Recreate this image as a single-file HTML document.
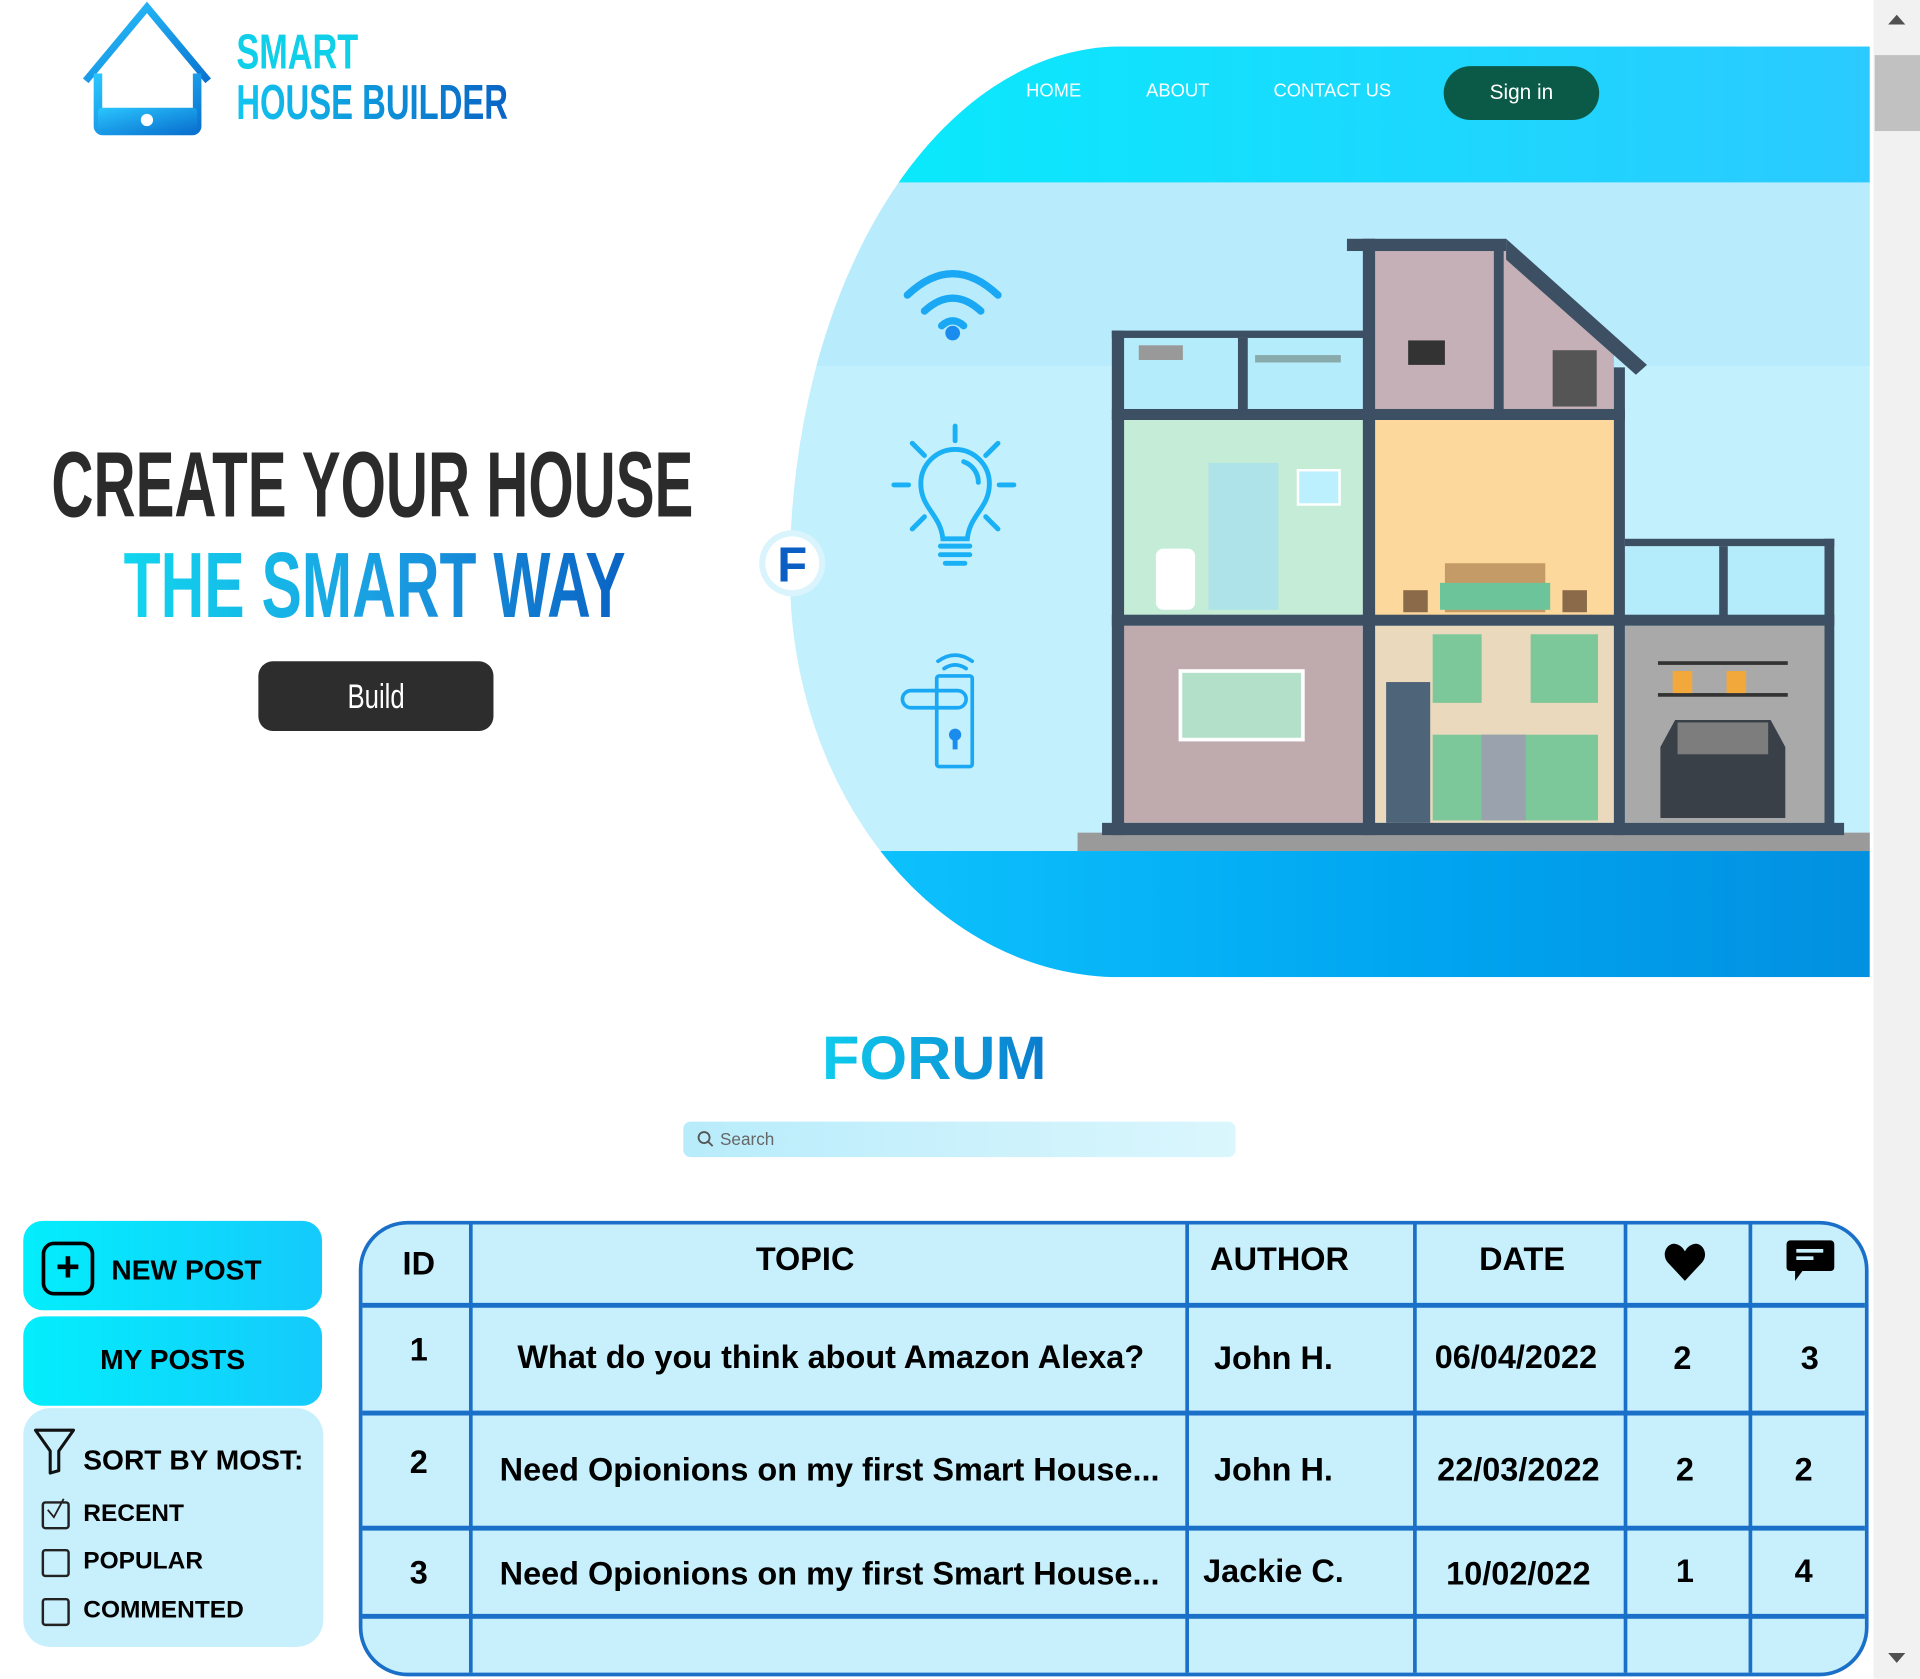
<!DOCTYPE html>
<html><head><meta charset="utf-8">
<style>
html,body{margin:0;padding:0;width:1920px;height:1679px;overflow:hidden;background:#fff}
#w{position:absolute;left:0;top:0;width:1568px;height:1371px;transform:scale(1.22449);transform-origin:0 0;font-family:"Liberation Sans",sans-serif}
.a{position:absolute}
.nar{font-family:"Liberation Sans Narrow","Liberation Sans",sans-serif;font-weight:bold}
.nav{position:absolute;top:66px;color:#fff;font-size:15px;letter-spacing:0}
.gt{background-image:linear-gradient(90deg,#12d6ee,#1a9ae0 55%,#0a63c4);-webkit-background-clip:text;background-clip:text;color:transparent}
.btn{position:absolute;left:19px;width:244px;border-radius:16px;background:linear-gradient(90deg,#03eefc,#15cafc);font-weight:bold;font-size:24px;color:#000}
.td{position:absolute;font-weight:bold;font-size:26.5px;color:#000;text-align:center;white-space:nowrap}
.cb{position:absolute;left:34px;width:19px;height:19px;border:2px solid #222;border-radius:3px}
.sl{position:absolute;left:68px;font-weight:bold;font-size:20px}
</style></head><body><div id="w">

<!-- scrollbar -->
<div class="a" style="left:1530px;top:0;width:38px;height:1371px;background:#f1f1f1"></div>
<div class="a" style="left:1531px;top:45px;width:37px;height:62px;background:#c1c1c1"></div>
<div class="a" style="left:1542px;top:12px;width:0;height:0;border-left:7px solid transparent;border-right:7px solid transparent;border-bottom:8px solid #505050"></div>
<div class="a" style="left:1542px;top:1350px;width:0;height:0;border-left:7px solid transparent;border-right:7px solid transparent;border-top:8px solid #505050"></div>

<!-- logo -->
<svg class="a" style="left:60px;top:0" width="120" height="115" viewBox="60 0 120 115">
<defs><linearGradient id="lg" x1="0" y1="0" x2="1" y2="1"><stop offset="0" stop-color="#2ac6ff"/><stop offset="1" stop-color="#0a72d0"/></linearGradient></defs>
<polyline points="70,66 120,6 170,66" fill="none" stroke="url(#lg)" stroke-width="6"/>
<path d="M80,60 V103 a4,4 0 0 0 4,4 H157 a4,4 0 0 0 4,-4 V60" fill="none" stroke="url(#lg)" stroke-width="7"/>
<rect x="80" y="88" width="81" height="19" rx="3" fill="url(#lg)"/>
<circle cx="120" cy="98" r="5" fill="#fff"/>
</svg>
<div class="a nar" style="left:193px;top:22px;font-size:40px;line-height:42px;color:#10cfe8;transform:scaleX(.7);transform-origin:0 0">SMART</div>
<div class="a nar gt" style="left:193px;top:62px;font-size:40px;line-height:44px;transform:scaleX(.67);transform-origin:0 0;white-space:nowrap;background-image:linear-gradient(90deg,#12c6f0,#0a63c4)">HOUSE BUILDER</div>

<!-- hero shape -->
<div class="a" style="left:645px;top:38px;width:882px;height:760px;overflow:hidden;border-radius:270px 0 0 270px / 430px 0 0 330px;background:#c3f0fd">
 <div class="a" style="left:0;top:0;width:882px;height:111px;background:linear-gradient(90deg,#06ecfc,#2bcaff)"></div>
 <div class="a" style="left:0;top:111px;width:882px;height:150px;background:#b8ecfc"></div>
 <div class="a" style="left:0;top:657px;width:882px;height:103px;background:linear-gradient(90deg,#0fc6ff,#00a4f0 60%,#0290e0)"></div>
</div>
<div class="nav" style="left:838px">HOME</div>
<div class="nav" style="left:936px">ABOUT</div>
<div class="nav" style="left:1040px">CONTACT US</div>
<div class="a" style="left:1179px;top:54px;width:127px;height:44px;border-radius:22px;background:#0b5a48;color:#fff;font-size:17px;text-align:center;line-height:44px">Sign in</div>

<!-- icons -->
<svg class="a" style="left:0;top:0" width="1530" height="800">
<g fill="none" stroke="#1aa8f4" stroke-width="6" stroke-linecap="round">
<path d="M741,241 Q778,206 815,241"/><path d="M755,254 Q778,233 801,254"/><path d="M769,266 Q778,258 787,266"/>
</g><circle cx="778" cy="272" r="6" fill="#1a8cee"/>
<g fill="none" stroke="#1ab0f6" stroke-width="4" stroke-linecap="round">
<line x1="780" y1="348" x2="780" y2="360"/><line x1="730" y1="396" x2="742" y2="396"/><line x1="816" y1="396" x2="828" y2="396"/>
<line x1="745" y1="362" x2="755" y2="372"/><line x1="805" y1="372" x2="815" y2="362"/><line x1="745" y1="432" x2="755" y2="422"/><line x1="805" y1="422" x2="815" y2="432"/>
<path d="M770,440 C768,420 752,415 752,395 A28,28 0 0 1 808,395 C808,415 792,420 790,440 Z"/>
<path d="M787,377 A18,18 0 0 1 799,394"/>
<line x1="768" y1="446" x2="792" y2="446"/><line x1="768" y1="453" x2="792" y2="453"/><line x1="772" y1="460" x2="788" y2="460"/>
</g>
<g fill="none" stroke="#1aa8f4" stroke-width="3" stroke-linecap="round">
<path d="M766,540 Q780,530 794,540"/><path d="M771,546 Q780,540 789,546"/>
<rect x="765" y="552" width="29" height="74" rx="2"/><rect x="737" y="564" width="52" height="14" rx="7"/>
</g><circle cx="780" cy="600" r="5" fill="#1a8cee"/><rect x="778" y="600" width="4" height="12" fill="#1a8cee"/>
<circle cx="647" cy="460" r="27" fill="#d9f4fd"/><circle cx="647" cy="460" r="22" fill="#fff"/>
<text x="647" y="475" text-anchor="middle" font-family="Liberation Sans" font-weight="bold" font-size="40" fill="#0a5ec4">F</text>

<!-- house -->
<rect x="880" y="680" width="647" height="15" fill="#9a9a9a"/>
<rect x="917" y="276" width="196" height="60" fill="#b5ecfb"/>
<polygon points="1122,203 1230,203 1318,290 1318,336 1122,336" fill="#c4b0b6"/>
<rect x="917" y="342" width="196" height="161" fill="#c5ecd6"/>
<rect x="1122" y="342" width="196" height="161" fill="#fdd89d"/>
<rect x="1327" y="446" width="163" height="57" fill="#b5ecfb"/>
<rect x="917" y="511" width="196" height="161" fill="#bfaaad"/>
<rect x="1122" y="511" width="196" height="161" fill="#ead9bd"/>
<rect x="1327" y="511" width="163" height="161" fill="#a9a9a9"/>
<g fill="#3d4f63">
<rect x="908" y="270" width="10" height="412"/><rect x="908" y="270" width="210" height="6"/>
<rect x="1113" y="195" width="10" height="487"/><rect x="1100" y="195" width="130" height="10"/>
<rect x="1220" y="200" width="8" height="140"/>
<polygon points="1230,195 1345,298 1336,306 1230,212"/>
<rect x="1318" y="300" width="9" height="382"/>
<rect x="1011" y="276" width="8" height="60"/>
<rect x="908" y="334" width="419" height="9"/><rect x="908" y="502" width="590" height="9"/>
<rect x="1327" y="440" width="171" height="6"/><rect x="1490" y="440" width="8" height="240"/><rect x="1404" y="446" width="7" height="57"/>
<rect x="900" y="672" width="606" height="10"/>
</g>
<rect x="987" y="378" width="57" height="120" fill="#a8e2ee" opacity=".8"/>
<rect x="944" y="448" width="32" height="50" rx="6" fill="#fff"/>
<rect x="1060" y="384" width="34" height="28" fill="#bdf0ff" stroke="#fff" stroke-width="2"/>
<rect x="1180" y="460" width="82" height="40" fill="#c49a66"/><rect x="1176" y="476" width="90" height="22" fill="#6cc49a"/>
<rect x="1146" y="482" width="20" height="18" fill="#8a6a48"/><rect x="1276" y="482" width="20" height="18" fill="#8a6a48"/>
<rect x="964" y="548" width="100" height="56" fill="#b2e0c8" stroke="#fff" stroke-width="3"/>
<rect x="1132" y="557" width="36" height="115" fill="#4e6478"/>
<rect x="1170" y="518" width="40" height="56" fill="#7cc89a"/><rect x="1250" y="518" width="55" height="56" fill="#7cc89a"/>
<rect x="1170" y="600" width="135" height="70" fill="#7cc89a"/><rect x="1210" y="600" width="36" height="70" fill="#9aa2ad"/>
<path d="M1356,610 L1368,588 H1446 L1458,610 V668 H1356 Z" fill="#3a4048"/><rect x="1370" y="590" width="74" height="26" fill="#7d7d7d"/>
<rect x="1354" y="540" width="106" height="3" fill="#333"/><rect x="1354" y="566" width="106" height="3" fill="#333"/>
<rect x="1366" y="548" width="16" height="18" fill="#f2a83a"/><rect x="1410" y="548" width="16" height="18" fill="#f2a83a"/>
<rect x="1268" y="286" width="36" height="46" fill="#555"/><rect x="1150" y="278" width="30" height="20" fill="#333"/>
<rect x="930" y="282" width="36" height="12" fill="#999"/><rect x="1025" y="290" width="70" height="6" fill="#8aa"/>
</svg>

<!-- headline -->
<div class="a nar" style="left:42px;top:357px;font-size:76px;line-height:80px;color:#2b2b2b;white-space:nowrap;transform:scaleX(.626);transform-origin:0 0">CREATE YOUR HOUSE</div>
<div class="a nar gt" style="left:101px;top:439px;font-size:76px;line-height:80px;white-space:nowrap;transform:scaleX(.65);transform-origin:0 0">THE SMART WAY</div>
<div class="a" style="left:211px;top:540px;width:192px;height:57px;border-radius:12px;background:#2d2d2d;color:#fff;text-align:center;line-height:57px"><span class="nar" style="display:inline-block;font-weight:normal;font-size:28px;transform:scaleX(.75)">Build</span></div>

<!-- forum -->
<div class="a gt" style="left:663px;top:834px;width:200px;text-align:center;font-weight:bold;font-size:50px;line-height:60px;background-image:linear-gradient(90deg,#0fd0ee,#0a78cc)">FORUM</div>
<div class="a" style="left:558px;top:916px;width:451px;height:29px;border-radius:6px;background:linear-gradient(90deg,#b8ecfb,#dbf6fd)"></div>
<svg class="a" style="left:568px;top:922px" width="16" height="16"><circle cx="7" cy="7" r="4.5" fill="none" stroke="#555" stroke-width="1.5"/><line x1="10" y1="10" x2="14" y2="14" stroke="#555" stroke-width="1.5"/></svg>
<div class="a" style="left:588px;top:922px;font-size:14px;color:#666">Search</div>

<!-- left panel -->
<div class="btn" style="top:997px;height:73px"></div>
<div class="a" style="left:34px;top:1014px;width:43px;height:44px;border:3px solid #000;border-radius:10px;box-sizing:border-box;text-align:center;font-size:34px;line-height:36px;font-weight:bold">+</div>
<div class="a" style="left:91px;top:1024px;font-weight:bold;font-size:23px">NEW POST</div>
<div class="btn" style="top:1075px;height:73px;text-align:center;line-height:71px;font-size:23px">MY POSTS</div>
<div class="a" style="left:19px;top:1150px;width:245px;height:195px;border-radius:22px;background:#c8f0fc"></div>
<svg class="a" style="left:26px;top:1165px" width="40" height="42"><path d="M3,3 H34 L22,20 V36 L15,38 V20 Z" fill="none" stroke="#111" stroke-width="2.5" stroke-linejoin="round"/></svg>
<div class="sl" style="top:1179px;font-size:23px">SORT BY MOST:</div>
<div class="cb" style="top:1226px"></div>
<svg class="a" style="left:36px;top:1222px" width="20" height="20"><path d="M3,11 L8,17 L16,2" fill="none" stroke="#222" stroke-width="1.5"/></svg>
<div class="sl" style="top:1225px">RECENT</div>
<div class="cb" style="top:1265px"></div><div class="sl" style="top:1264px">POPULAR</div>
<div class="cb" style="top:1305px"></div><div class="sl" style="top:1304px">COMMENTED</div>

<!-- table -->
<div class="a" style="left:293px;top:997px;width:1233px;height:372px;box-sizing:border-box;border:3px solid #1a6fc8;border-radius:40px;background:#c8f0fc;overflow:hidden">
 <div class="a" style="left:87px;top:0;width:3px;height:372px;background:#1a6fc8"></div>
 <div class="a" style="left:672px;top:0;width:3px;height:372px;background:#1a6fc8"></div>
 <div class="a" style="left:858px;top:0;width:3px;height:372px;background:#1a6fc8"></div>
 <div class="a" style="left:1030px;top:0;width:3px;height:372px;background:#1a6fc8"></div>
 <div class="a" style="left:1132px;top:0;width:3px;height:372px;background:#1a6fc8"></div>
 <div class="a" style="left:0;top:64px;width:1233px;height:4px;background:#1a6fc8"></div>
 <div class="a" style="left:0;top:152px;width:1233px;height:4px;background:#1a6fc8"></div>
 <div class="a" style="left:0;top:246px;width:1233px;height:4px;background:#1a6fc8"></div>
 <div class="a" style="left:0;top:318px;width:1233px;height:4px;background:#1a6fc8"></div>
</div>
<div class="td" style="left:300px;width:84px;top:1017px">ID</div>
<div class="td" style="left:366px;width:583px;top:1013px">TOPIC</div>
<div class="td" style="left:968px;width:154px;top:1013px">AUTHOR</div>
<div class="td" style="left:1157px;width:172px;top:1013px">DATE</div>
<svg class="a" style="left:1358px;top:1014px" width="36" height="34"><path d="M18,32 L4,17 C-2,10 4,0 11,2 C15,3 17,6 18,8 C19,6 21,3 25,2 C32,0 38,10 32,17 Z" fill="#000"/></svg>
<svg class="a" style="left:1458px;top:1011px" width="42" height="38"><path d="M4,2 H37 a3,3 0 0 1 3,3 V24 a3,3 0 0 1 -3,3 H14 L8,35 V27 H4 a3,3 0 0 1 -3,-3 V5 a3,3 0 0 1 3,-3Z" fill="#000"/><rect x="9" y="9" width="22" height="3" fill="#c8f0fc"/><rect x="9" y="15" width="14" height="3" fill="#c8f0fc"/></svg>

<div class="td" style="left:300px;width:84px;top:1087px">1</div>
<div class="td" style="left:387px;width:583px;top:1093px">What do you think about Amazon Alexa?</div>
<div class="td" style="left:956px;width:168px;top:1094px">John H.</div>
<div class="td" style="left:1152px;width:172px;top:1093px">06/04/2022</div>
<div class="td" style="left:1326px;width:96px;top:1094px">2</div>
<div class="td" style="left:1430px;width:96px;top:1094px">3</div>

<div class="td" style="left:300px;width:84px;top:1179px">2</div>
<div class="td" style="left:386px;width:583px;top:1185px">Need Opionions on my first Smart House...</div>
<div class="td" style="left:956px;width:168px;top:1185px">John H.</div>
<div class="td" style="left:1154px;width:172px;top:1185px">22/03/2022</div>
<div class="td" style="left:1328px;width:96px;top:1185px">2</div>
<div class="td" style="left:1425px;width:96px;top:1185px">2</div>

<div class="td" style="left:300px;width:84px;top:1269px">3</div>
<div class="td" style="left:386px;width:583px;top:1270px">Need Opionions on my first Smart House...</div>
<div class="td" style="left:956px;width:168px;top:1268px">Jackie C.</div>
<div class="td" style="left:1154px;width:172px;top:1270px">10/02/022</div>
<div class="td" style="left:1328px;width:96px;top:1268px">1</div>
<div class="td" style="left:1425px;width:96px;top:1268px">4</div>

</div></body></html>
